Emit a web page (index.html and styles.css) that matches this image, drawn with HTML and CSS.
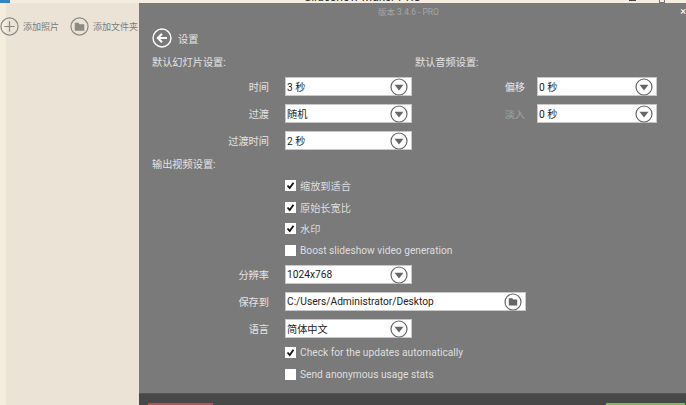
FILE: index.html
```html
<!DOCTYPE html>
<html lang="zh-CN">
<head>
<meta charset="utf-8">
<title>Slideshow Maker PRO</title>
<link rel="stylesheet" href="styles.css">
</head>
<body>
<header class="titlebar">
  <span class="app-icon"></span>
  <span class="app-title">Slideshow Maker PRO</span>
  <span class="win-min"></span>
  <span class="win-max"></span>
</header>
<div class="main">
  <aside class="sidebar">
    <div class="tool"><svg class="tool-icon" viewBox="0 0 20 20"><circle cx="10" cy="10" r="9" fill="none" stroke="#8c8a84" stroke-width="1.3"/><path d="M10 4.500v11M4.500 10h11" stroke="#8c8a84" stroke-width="1.3"/></svg><span>添加照片</span></div>
    <div class="tool"><svg class="tool-icon" viewBox="0 0 20 20"><circle cx="10" cy="10" r="9" fill="none" stroke="#8c8a84" stroke-width="1.3"/><path d="M5 6h4l1 1.500h5V14.500H5z" fill="#8c8a84"/></svg><span>添加文件夹</span></div>
  </aside>
  <section class="panel">
    <div class="panel-top">
      <span class="version">版本 3.4.6 - PRO</span>
      <span class="close">×</span>
    </div>
    <div class="heading">
      <svg class="back" viewBox="0 0 20 20"><circle cx="10" cy="10" r="9" fill="none" stroke="#fff" stroke-width="1.4"/><path d="M15 10H6.500M10 5.800 5.800 10l4.200 4.200" fill="none" stroke="#fff" stroke-width="2"/></svg>
      <span>设置</span>
    </div>
    <div class="columns">
      <div class="col-slide">
        <div class="group-title">默认幻灯片设置:</div>
        <div class="row first"><label>时间</label><div class="select"><span>3 秒</span><svg class="arrow" viewBox="0 0 18 18"><circle cx="9" cy="9" r="8" fill="none" stroke="#666" stroke-width="1.200"/><path d="M4.500 6.800h9L9 12.500z" fill="#666"/></svg></div></div>
        <div class="row"><label>过渡</label><div class="select"><span>随机</span><svg class="arrow" viewBox="0 0 18 18"><circle cx="9" cy="9" r="8" fill="none" stroke="#666" stroke-width="1.200"/><path d="M4.500 6.800h9L9 12.500z" fill="#666"/></svg></div></div>
        <div class="row"><label>过渡时间</label><div class="select"><span>2 秒</span><svg class="arrow" viewBox="0 0 18 18"><circle cx="9" cy="9" r="8" fill="none" stroke="#666" stroke-width="1.200"/><path d="M4.500 6.800h9L9 12.500z" fill="#666"/></svg></div></div>
      </div>
      <div class="col-audio">
        <div class="group-title">默认音频设置:</div>
        <div class="row first"><label>偏移</label><div class="select"><span>0 秒</span><svg class="arrow" viewBox="0 0 18 18"><circle cx="9" cy="9" r="8" fill="none" stroke="#666" stroke-width="1.200"/><path d="M4.500 6.800h9L9 12.500z" fill="#666"/></svg></div></div>
        <div class="row"><label class="dim">淡入</label><div class="select"><span>0 秒</span><svg class="arrow" viewBox="0 0 18 18"><circle cx="9" cy="9" r="8" fill="none" stroke="#666" stroke-width="1.200"/><path d="M4.500 6.800h9L9 12.500z" fill="#666"/></svg></div></div>
      </div>
    </div>
    <div class="group-title output-title">输出视频设置:</div>
    <div class="checks">
      <div class="check"><span class="box"><svg viewBox="0 0 11 11"><path d="M2.500 5.500 4.700 8 8.500 2.800" fill="none" stroke="#111" stroke-width="1.800"/></svg></span><span>缩放到适合</span></div>
      <div class="check"><span class="box"><svg viewBox="0 0 11 11"><path d="M2.500 5.500 4.700 8 8.500 2.800" fill="none" stroke="#111" stroke-width="1.800"/></svg></span><span>原始长宽比</span></div>
      <div class="check"><span class="box"><svg viewBox="0 0 11 11"><path d="M2.500 5.500 4.700 8 8.500 2.800" fill="none" stroke="#111" stroke-width="1.800"/></svg></span><span>水印</span></div>
      <div class="check"><span class="box"></span><span>Boost slideshow video generation</span></div>
    </div>
    <div class="row tight"><label>分辨率</label><div class="select"><span>1024x768</span><svg class="arrow" viewBox="0 0 18 18"><circle cx="9" cy="9" r="8" fill="none" stroke="#666" stroke-width="1.200"/><path d="M4.500 6.800h9L9 12.500z" fill="#666"/></svg></div></div>
    <div class="row"><label>保存到</label><div class="select path"><span>C:/Users/Administrator/Desktop</span><svg class="arrow" viewBox="0 0 18 18"><circle cx="9" cy="9" r="8" fill="none" stroke="#666" stroke-width="1.200"/><path d="M4.800 5.300h3.400l1 1.300h4v6H4.800z" fill="#666"/></svg></div></div>
    <div class="row"><label>语言</label><div class="select"><span>简体中文</span><svg class="arrow" viewBox="0 0 18 18"><circle cx="9" cy="9" r="8" fill="none" stroke="#666" stroke-width="1.200"/><path d="M4.500 6.800h9L9 12.500z" fill="#666"/></svg></div></div>
    <div class="checks bottom">
      <div class="check"><span class="box"><svg viewBox="0 0 11 11"><path d="M2.500 5.500 4.700 8 8.500 2.800" fill="none" stroke="#111" stroke-width="1.800"/></svg></span><span>Check for the updates automatically</span></div>
      <div class="check"><span class="box"></span><span>Send anonymous usage stats</span></div>
    </div>
    <footer class="footer">
      <span class="btn red"></span>
      <span class="btn green"></span>
    </footer>
  </section>
</div>
</body>
</html>
```
FILE: styles.css
```css
* { box-sizing: border-box; }
html, body { margin: 0; height: 100%; overflow: hidden; }
body {
  width: 686px;
  height: 405px;
  display: flex;
  flex-direction: column;
  background: #ebe3d5;
  font-family: Roboto, "Noto Sans CJK SC", sans-serif;
  font-size: 10.2px;
  color: #e4e4e4;
}
.titlebar {
  height: 3px;
  flex: none;
  position: relative;
  overflow: hidden;
  background: #f5eee0;
  color: #333;
}
.app-icon {
  position: absolute;
  left: 0;
  top: -6px;
  width: 10px;
  height: 9px;
  background: #2f86c5;
}
.app-title {
  position: absolute;
  left: 304px;
  top: -11px;
  font-size: 12px;
  line-height: 16px;
  white-space: nowrap;
}
.win-min {
  position: absolute;
  left: 629px;
  top: 0;
  width: 7px;
  height: 1px;
  background: #444;
}
.win-max {
  position: absolute;
  left: 659px;
  top: -3px;
  width: 6px;
  height: 6px;
  border: 1px solid #777;
}
.main { flex: 1; display: flex; min-height: 0; }
.sidebar {
  width: 139px;
  flex: none;
  display: flex;
  gap: 11px;
  align-items: flex-start;
  padding-top: 14px;
  background: linear-gradient(to right, #f4ecdd 0, #f4ecdd 6px, #ebe3d5 6px);
  color: #7d7b76;
  font-size: 9px;
}
.tool { display: flex; align-items: center; gap: 4px; white-space: nowrap; }
.tool-icon { width: 19px; height: 19px; flex: none; }
.panel {
  flex: 1;
  display: flex;
  flex-direction: column;
  background: #7a7a7a;
  position: relative;
  min-width: 0;
}
.panel-top { height: 11px; position: relative; }
.version {
  position: absolute;
  left: 239px;
  top: 3px;
  font-size: 8.5px;
  line-height: 12px;
  color: #a6a6a6;
  white-space: nowrap;
}
.close {
  position: absolute;
  right: 0;
  top: 2px;
  color: #fff;
  font-size: 11px;
  line-height: 14px;
}
.heading {
  display: flex;
  align-items: center;
  gap: 6px;
  margin: 14px 0 0 13px;
  height: 20px;
}
.back { width: 20px; height: 20px; flex: none; }
.columns { display: flex; margin-top: 7px; }
.col-slide { width: 276px; }
.col-audio { flex: 1; }
.group-title { line-height: 16px; height: 16px; padding-left: 13px; white-space: nowrap; }
.col-audio .group-title { padding-left: 0; }
.row {
  display: flex;
  align-items: center;
  height: 19px;
  margin-top: 8px;
}
.row.first { margin-top: 6px; }
.row.tight { margin-top: 9px; }
.row label {
  width: 146px;
  text-align: right;
  padding-right: 16px;
  flex: none;
  white-space: nowrap;
}
.col-audio .row label {
  width: 122px;
  padding-right: 12px;
}
.row label.dim { color: #a8a8a8; }
.select {
  width: 127px;
  height: 19px;
  flex: none;
  display: flex;
  align-items: center;
  justify-content: space-between;
  background: #fff;
  border: 1px solid #c8c8c8;
  padding: 0 3px 0 1px;
  color: #222;
  white-space: nowrap;
}
.col-audio .select { width: 120px; }
.select.path { width: 241px; }
.arrow { width: 18px; height: 18px; flex: none; }
.output-title { margin-top: 7px; }
.checks { display: flex; flex-direction: column; gap: 10px; margin: 7px 0 0 146px; }
.checks.bottom { margin-top: 9px; }
.check { display: flex; align-items: center; gap: 4px; height: 11.5px; white-space: nowrap; color: #dedede; }
.box {
  width: 11px;
  height: 11px;
  flex: none;
  background: #fff;
  display: flex;
}
.box svg { width: 11px; height: 11px; }
.footer {
  margin-top: auto;
  height: 12px;
  flex: none;
  background: #484848;
  border-top: 1px solid #555;
  display: flex;
  justify-content: space-between;
  padding: 9px 1px 0 9px;
}
.btn { display: block; height: 2px; }
.red { width: 65px; background: #c0504f; }
.green { width: 79px; background: #84bb48; }
```
